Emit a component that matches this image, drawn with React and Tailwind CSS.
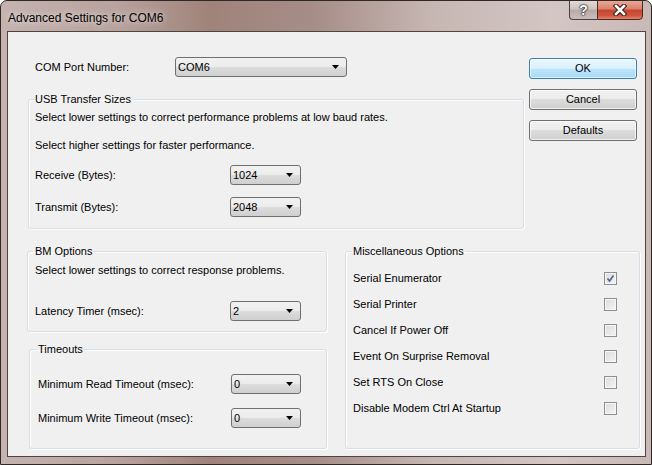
import React from "react";

function Combo({ value, w }) {
  return (
    <div
      className={`flex items-center justify-between h-[20px] ${w} rounded-[3px] border border-[#707070] bg-[linear-gradient(#f2f2f2_0%,#ebebeb_50%,#dddddd_50%,#cfcfcf_100%)] pl-[2px] pr-[7px]`}
    >
      <span className="leading-[13px]">{value}</span>
      <svg width="7" height="4" viewBox="0 0 7 4">
        <path d="M0 0h7L3.5 4z" fill="#000" />
      </svg>
    </div>
  );
}

function Btn({ label, def }) {
  return (
    <div
      className={
        def
          ? "flex items-center justify-center h-[21px] rounded-[3px] border border-[#3c7fb1] bg-[linear-gradient(#eaf6fd_0%,#d9f0fc_50%,#bee6fd_50%,#a7d9f5_100%)] shadow-[inset_0_0_0_1px_rgba(255,255,255,0.6)]"
          : "flex items-center justify-center h-[21px] rounded-[3px] border border-[#707070] bg-[linear-gradient(#f2f2f2_0%,#ebebeb_50%,#dddddd_50%,#cfcfcf_100%)] shadow-[inset_0_0_0_1px_rgba(255,255,255,0.7)]"
      }
    >
      {label}
    </div>
  );
}

function Check({ checked }) {
  return (
    <div className="w-[13px] h-[13px] border border-[#8e8f8f] bg-[linear-gradient(135deg,#dcdcdc_0%,#f4f4f4_100%)] shadow-[inset_0_0_0_1px_#f6f6f6] flex items-center justify-center">
      {checked && (
        <svg width="9" height="9" viewBox="0 0 9 9">
          <path d="M1.5 4.5 L3.5 7 L7.5 1.5" stroke="#5b6b90" strokeWidth="1.8" fill="none" />
        </svg>
      )}
    </div>
  );
}

function Row({ label, value, lw, cw }) {
  return (
    <div className="flex items-center h-[20px]">
      <div className={lw}>{label}</div>
      <Combo value={value} w={cw} />
    </div>
  );
}

export default function App() {
  const misc = [
    ["Serial Enumerator", true],
    ["Serial Printer", false],
    ["Cancel If Power Off", false],
    ["Event On Surprise Removal", false],
    ["Set RTS On Close", false],
    ["Disable Modem Ctrl At Startup", false],
  ];
  return (
    <div className="w-[652px] h-[465px] overflow-hidden rounded-t-[7px] border border-[#2f2826] bg-[linear-gradient(90deg,#c4b3af_0%,#b8a29d_18%,#9f837b_32%,#a68d87_48%,#c6b6b2_66%,#d3c6c3_85%,#c9b9b6_100%)] font-['Liberation_Sans',Arial,sans-serif] text-[11px] text-black leading-[13px]">
      {/* title bar */}
      <div className="flex h-[30px]">
        <div className="pl-[7px] pt-[10px] text-[12px] leading-[14px] font-['Liberation_Sans_Narrow','Liberation_Sans',sans-serif] [text-shadow:0_0_6px_rgba(255,255,255,0.9)]">
          Advanced Settings for COM6
        </div>
        <div className="ml-auto mr-[8px] flex h-[20px] -mt-[1px]">
          <div className="w-[28px] h-full rounded-bl-[4px] border border-[#4a3f3d] border-r-0 bg-[linear-gradient(#e2d9d7_0%,#cfc3c1_45%,#b8a9a6_50%,#c9bdbb_100%)] flex items-center justify-center text-white font-bold text-[14px] leading-none [text-shadow:0_0_1px_#000,0_0_2px_#333,0_0_2px_#333]">
            ?
          </div>
          <div className="w-[46px] h-full rounded-br-[4px] border border-[#4a2a24] bg-[linear-gradient(#e9a899_0%,#d9806c_45%,#c4452f_50%,#d0553c_80%,#e0846a_100%)] flex items-center justify-center">
            <svg width="14" height="12" viewBox="0 0 14 12">
              <path d="M3 2 L11 10 M11 2 L3 10" stroke="#3b1a14" strokeWidth="4.6" strokeLinecap="square" fill="none" />
              <path d="M3 2 L11 10 M11 2 L3 10" stroke="#ffffff" strokeWidth="2.6" strokeLinecap="square" fill="none" />
            </svg>
          </div>
        </div>
      </div>
      {/* client */}
      <div className="ml-[6px] w-[639px] h-[426px] border border-[#4f4442] bg-[#f0f0f0]">
        {/* top section */}
        <div className="flex pt-[25px]">
          <div className="ml-[20px] w-[496px] flex flex-col">
            <div className="flex items-center h-[20px]">
              <div className="pl-[7px] w-[147px]">COM Port Number:</div>
              <Combo value="COM6" w="w-[172px]" />
            </div>
            <fieldset className="mt-[16px] h-[136px] border border-[#d5dfe5] rounded-[3px] pl-[6px] shadow-[inset_1px_1px_0_#fff,1px_1px_0_#fff]">
              <legend className="-ml-[1px] px-[1px] leading-[13px]">USB Transfer Sizes</legend>
              <div className="mt-[5px] h-[13px]">Select lower settings to correct performance problems at low baud rates.</div>
              <div className="mt-[15px] h-[13px]">Select higher settings for faster performance.</div>
              <div className="mt-[13px]">
                <Row label="Receive (Bytes):" value="1024" lw="w-[195px]" cw="w-[71px]" />
              </div>
              <div className="mt-[12px]">
                <Row label="Transmit (Bytes):" value="2048" lw="w-[195px]" cw="w-[71px]" />
              </div>
            </fieldset>
          </div>
          <div className="ml-[5px] w-[108px] pt-[1px] flex flex-col gap-[10px]">
            <Btn label="OK" def />
            <Btn label="Cancel" />
            <Btn label="Defaults" />
          </div>
        </div>
        {/* bottom section */}
        <div className="flex mt-[16px]">
          <div className="ml-[19px] w-[300px] flex flex-col">
            <fieldset className="h-[87px] border border-[#d5dfe5] rounded-[3px] pl-[7px] shadow-[inset_1px_1px_0_#fff,1px_1px_0_#fff]">
              <legend className="-ml-[1px] px-[1px] leading-[13px]">BM Options</legend>
              <div className="mt-[6px] h-[13px]">Select lower settings to correct response problems.</div>
              <div className="mt-[24px]">
                <Row label="Latency Timer (msec):" value="2" lw="w-[195px]" cw="w-[71px]" />
              </div>
            </fieldset>
            <fieldset className="ml-[2px] mt-[11px] w-[298px] h-[106px] border border-[#d5dfe5] rounded-[3px] pl-[8px] shadow-[inset_1px_1px_0_#fff,1px_1px_0_#fff]">
              <legend className="-ml-[1px] px-[1px] leading-[13px]">Timeouts</legend>
              <div className="mt-[18px]">
                <Row label="Minimum Read Timeout (msec):" value="0" lw="w-[193px]" cw="w-[70px]" />
              </div>
              <div className="mt-[14px]">
                <Row label="Minimum Write Timeout (msec):" value="0" lw="w-[193px]" cw="w-[70px]" />
              </div>
            </fieldset>
          </div>
          <fieldset className="ml-[18px] w-[295px] h-[204px] border border-[#d5dfe5] rounded-[3px] pl-[7px] pr-[22px] shadow-[inset_1px_1px_0_#fff,1px_1px_0_#fff]">
            <legend className="-ml-[1px] px-[1px] leading-[13px]">Miscellaneous Options</legend>
            <div className="mt-[7px] flex flex-col">
              {misc.map(([l, c]) => (
                <div key={l} className="h-[26px] flex items-center justify-between">
                  <span>{l}</span>
                  <Check checked={c} />
                </div>
              ))}
            </div>
          </fieldset>
        </div>
      </div>
    </div>
  );
}
